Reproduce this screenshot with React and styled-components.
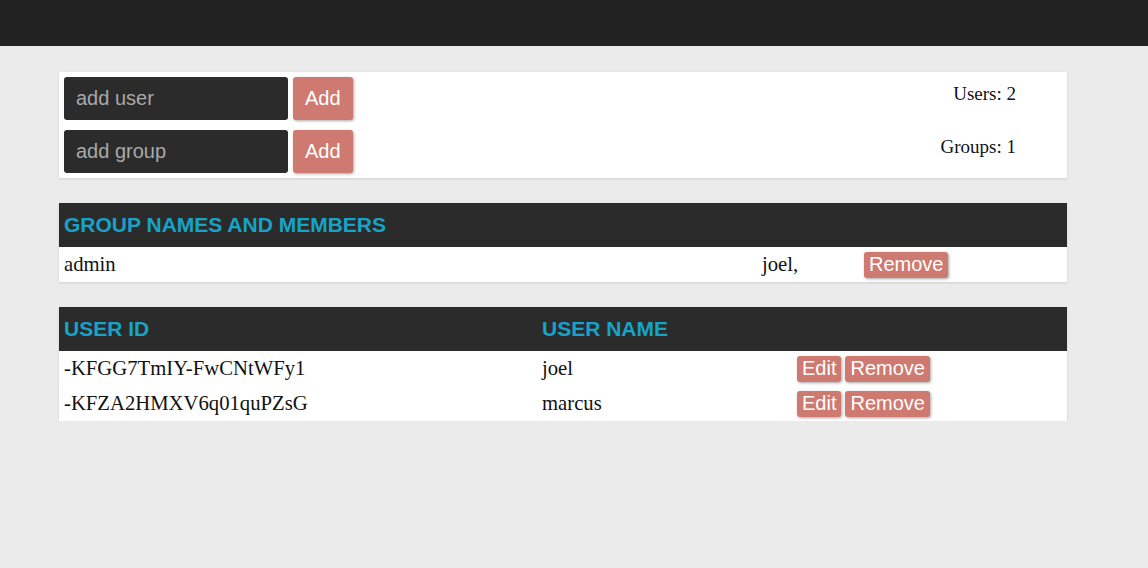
import React from 'react';
import styled, { createGlobalStyle } from 'styled-components';

const GlobalStyle = createGlobalStyle`
  html, body {
    margin: 0;
    padding: 0;
    background-color: #ebebeb;
    font-family: 'Liberation Serif', 'Times New Roman', serif;
    color: #111;
  }
`;

const TopBar = styled.div`
  height: 46px;
  background-color: #222222;
`;

const Main = styled.div`
  width: 1008px;
  margin: 26px 0 0 59px;
  display: flex;
  flex-direction: column;
  gap: 25px;
`;

const Panel = styled.div`
  background-color: #fff;
  box-shadow: 0 1px 2px rgba(0, 0, 0, 0.12);
`;

const FormPanel = styled(Panel)`
  padding: 5px;
  display: flex;
  flex-direction: column;
  gap: 10px;
`;

const FormRow = styled.div`
  display: flex;
  align-items: stretch;
  gap: 5px;
  height: 43px;
`;

const TextInput = styled.input`
  width: 224px;
  box-sizing: border-box;
  padding: 0 12px;
  border: none;
  border-radius: 3px;
  background-color: #2b2b2b;
  color: #ddd;
  font-family: 'Liberation Sans', Arial, sans-serif;
  font-size: 20px;

  &::placeholder {
    color: #a9a9a9;
  }

  &:focus {
    outline: none;
  }
`;

const Button = styled.button`
  border: none;
  border-radius: 3px;
  background-color: #cf7a70;
  color: #fff;
  font-family: 'Liberation Sans', Arial, sans-serif;
  font-size: 20px;
  line-height: 23px;
  padding: ${p => (p.$big ? '0 12px' : '0 5px')};
  height: ${p => (p.$big ? '43px' : '26px')};
  box-shadow: 1px 1px 3px rgba(0, 0, 0, 0.35);
  cursor: pointer;
`;

const Stat = styled.div`
  margin-left: auto;
  padding: 6px 46px 0 0;
  font-size: 19px;
  line-height: 22px;
`;

const TableHead = styled.div`
  display: grid;
  grid-template-columns: ${p => p.$cols};
  align-items: center;
  height: 44px;
  background-color: #2b2b2b;
`;

const HeadCell = styled.div`
  padding: 0 5px;
  color: #17a3c8;
  font-family: 'Liberation Sans', Arial, sans-serif;
  font-weight: bold;
  font-size: 21px;
`;

const Row = styled.div`
  display: grid;
  grid-template-columns: ${p => p.$cols};
  align-items: center;
  height: 35px;
`;

const Cell = styled.div`
  padding: 0 5px;
  font-size: 20.7px;
  display: flex;
  gap: 4px;
`;

const groupCols = '698px 102px 1fr';
const userCols = '478px 255px 1fr';

const users = [
  { id: '-KFGG7TmIY-FwCNtWFy1', name: 'joel' },
  { id: '-KFZA2HMXV6q01quPZsG', name: 'marcus' },
];

const groups = [{ name: 'admin', members: ['joel'] }];

export default function App() {
  return (
    <>
      <GlobalStyle />
      <TopBar />
      <Main>
        <FormPanel>
          <FormRow>
            <TextInput placeholder="add user" />
            <Button $big>Add</Button>
            <Stat>Users: {users.length}</Stat>
          </FormRow>
          <FormRow>
            <TextInput placeholder="add group" />
            <Button $big>Add</Button>
            <Stat>Groups: {groups.length}</Stat>
          </FormRow>
        </FormPanel>

        <Panel>
          <TableHead $cols="1fr">
            <HeadCell>GROUP NAMES AND MEMBERS</HeadCell>
          </TableHead>
          {groups.map(g => (
            <Row key={g.name} $cols={groupCols}>
              <Cell>{g.name}</Cell>
              <Cell>{g.members.map(m => `${m},`).join(' ')}</Cell>
              <Cell>
                <Button>Remove</Button>
              </Cell>
            </Row>
          ))}
        </Panel>

        <Panel>
          <TableHead $cols={userCols}>
            <HeadCell>USER ID</HeadCell>
            <HeadCell>USER NAME</HeadCell>
            <div />
          </TableHead>
          {users.map(u => (
            <Row key={u.id} $cols={userCols}>
              <Cell>{u.id}</Cell>
              <Cell>{u.name}</Cell>
              <Cell>
                <Button>Edit</Button>
                <Button>Remove</Button>
              </Cell>
            </Row>
          ))}
        </Panel>
      </Main>
    </>
  );
}
